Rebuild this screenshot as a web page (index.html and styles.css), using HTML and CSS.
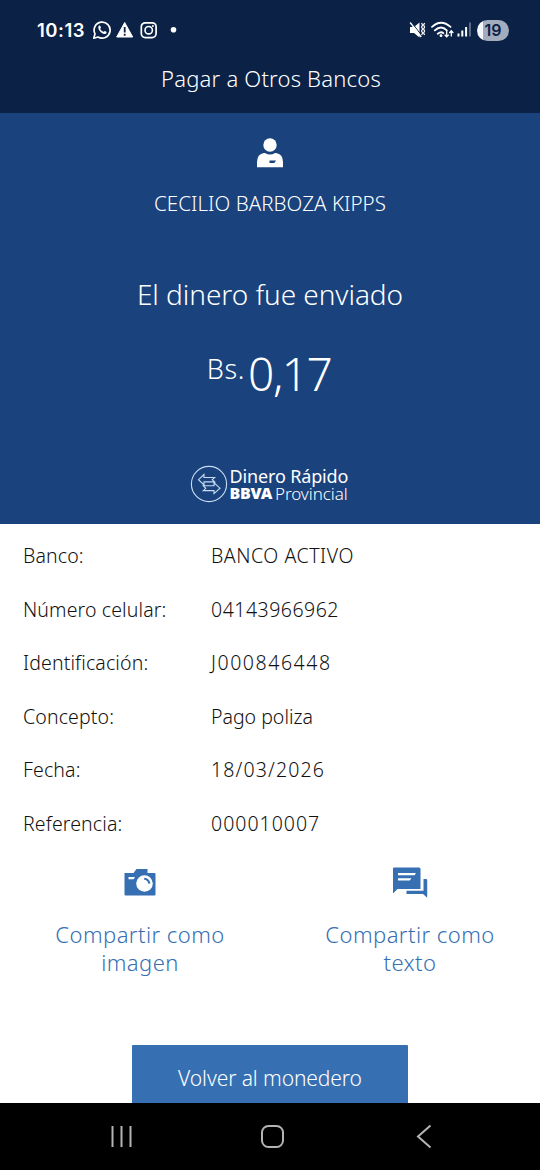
FILE: index.html
```html
<!DOCTYPE html>
<html lang="es">
<head>
<meta charset="utf-8">
<title>Pagar a Otros Bancos</title>
<link rel="stylesheet" href="styles.css">
</head>
<body>
<div class="screen">
  <header class="top">
    <div class="status">
      <span class="clock">10:13</span>
      <svg class="notif" width="90" height="20" viewBox="0 0 90 20" fill="none" stroke="#fff">
        <path d="M1.8 18.2l1.200-4.400A8 8 0 1 1 6 17z" stroke-width="1.700" stroke-linejoin="round"/>
        <path d="M6.600 6.100c.6-.8 1.500-.6 1.800.2l.5 1.200c.1.500-.7 1.100-.6 1.400.7 1.300 1.700 2.200 3.100 2.800.4.100.9-1 1.400-.8l1.600.8c.5.300.1 1.600-.6 2-2.900 1.600-8.800-3.600-7.200-7.600z" fill="#fff" stroke="none"/>
        <path d="M32.700 2.500l8 14.500h-16z" fill="#fff" stroke="#fff" stroke-width="1" stroke-linejoin="round"/>
        <path d="M32.700 7v5.500M32.700 13.800v2" stroke="#0b2146" stroke-width="1.800"/>
        <rect x="49.300" y="2.800" width="14.800" height="14.800" rx="4" stroke-width="1.700"/>
        <circle cx="56.700" cy="10.200" r="3.700" stroke-width="1.600"/>
        <circle cx="60.900" cy="6" r="1" fill="#fff" stroke="none"/>
        <circle cx="81.500" cy="9.700" r="2.800" fill="#fff" stroke="none"/>
      </svg>
      <svg class="signals" width="64" height="20" viewBox="0 0 64 20" fill="none" stroke="#fff">
        <path d="M1 7h4l5.500-4.500v15L5 13H1z" fill="#fff" stroke="none"/>
        <path d="M2.300 2l10 13" stroke="#0b2146" stroke-width="1"/>
        <path d="M1.200 2.500l11 14.500" stroke-width="1.400"/>
        <path d="M12.600 3l1 2-1 2 1 2-1 2 1 2-1 2M15.600 3l-1 2 1 2-1 2 1 2-1 2 1 2" stroke-width="1.200"/>
        <path d="M23 6.900q9-8.200 18.500 0M25.800 10.400q6.400-5.700 12 0M28.800 13.700q3.400-2.700 5.500-.5" stroke-width="1.800" stroke-linecap="round"/>
        <circle cx="32" cy="15.700" r="1.400" fill="#fff" stroke="none"/>
        <path d="M37.700 11v5.700m-2-2l2 2.200 2-2.200M42.300 16.500v-5.500m-2 2l2-2.200 2 2.200" stroke-width="1.300"/>
        <path d="M49.500 16.500v-3M53.300 16.500V10.500M57.100 16.500V7" stroke-width="2"/>
        <path d="M61 16.500V2.500" stroke="#64738d" stroke-width="1.800"/>
      </svg>
      <span class="battery">19</span>
    </div>
    <h1 class="title">Pagar a Otros Bancos</h1>
  </header>

  <section class="hero">
    <svg class="person" width="28" height="30" viewBox="0 0 28 30">
      <circle cx="14" cy="7" r="6.700" fill="#fff"/>
      <path d="M1 29.300V24q0-8 7-9h1q5 3 10 0h1q7 1 7 9v5.300z" fill="#fff"/>
      <path d="M13.500 22.500h6.500l-1.600 2.600h-4.900z" fill="#1a427c"/>
    </svg>
    <p class="name">CECILIO BARBOZA KIPPS</p>
    <p class="sent">El dinero fue enviado</p>
    <p class="amount"><span class="currency">Bs.</span><span class="value">0,17</span></p>
    <div class="brand">
      <svg class="brand-mark" width="38" height="38" viewBox="0 0 38 38" fill="none" stroke="#c9dcf4" stroke-width="1.100">
        <circle cx="19" cy="19" r="17.600"/>
        <path d="M14 9.500L8.500 14.700l5.500 5.200v-3h10.700l-2.500-2.200 2.500-2.200H14zM24 17.800v3H13.300l2.500 2.500-2.500 2.300H24v3l6-5.400z"/>
      </svg>
      <div class="brand-text">
        <span class="brand-top">Dinero Rápido</span>
        <span class="brand-bottom"><b>BBVA</b><span class="provincial">Provincial</span></span>
      </div>
    </div>
  </section>

  <main class="content">
    <dl class="details">
      <dt>Banco:</dt><dd class="bank">BANCO ACTIVO</dd>
      <dt>Número celular:</dt><dd class="phone">04143966962</dd>
      <dt>Identificación:</dt><dd class="ident">J000846448</dd>
      <dt>Concepto:</dt><dd>Pago poliza</dd>
      <dt>Fecha:</dt><dd class="date">18/03/2026</dd>
      <dt>Referencia:</dt><dd class="ref">000010007</dd>
    </dl>
    <div class="share">
      <div class="share-item">
        <svg width="36" height="34" viewBox="0 0 36 34">
          <path d="M2.500 7h9l3-4h11v4h7q1 0 1 1v20.500q0 1-1 1H3.500q-1 0-1-1z" fill="#3670b3"/>
          <path d="M6.500 11h6.500l-1.400 2.200H6.500z" fill="#fff"/>
          <circle cx="22.500" cy="17.500" r="8.300" fill="#fff"/>
          <path d="M22.200 12.700q4.500.3 5.200 5" fill="none" stroke="#3670b3" stroke-width="2"/>
        </svg>
        <span>Compartir como<br>imagen</span>
      </div>
      <div class="share-item">
        <svg width="36" height="34" viewBox="0 0 36 34" fill="#3670b3">
          <path d="M2 1.500h25q1.500 0 1.500 1.500v20H5.500L1 27.500V2.500q0-1 1-1z"/>
          <path d="M31.500 13h2.500q1.200 0 1.200 1.200v17.500L31 28H14.500v-3.200h17z"/>
          <path d="M6 7h18l-1.400 2.200H6zM6 12.200h13.500L17.700 14.400H6z" fill="#fff"/>
        </svg>
        <span>Compartir como<br>texto</span>
      </div>
    </div>
    <button class="back">Volver al monedero</button>
  </main>

  <nav class="nav">
    <svg width="540" height="67" viewBox="0 0 540 67" fill="none" stroke="#b4b4b4" stroke-width="2">
      <path d="M112.500 23v21M121.500 23v21M130.500 23v21"/>
      <rect x="262" y="23" width="21" height="21" rx="6.500"/>
      <path d="M430.500 22.500l-12.500 11L430.500 44.500"/>
    </svg>
  </nav>
</div>
</body>
</html>
```
FILE: styles.css
```css
* { box-sizing: border-box; }
body { margin: 0; font-family: "Noto Sans", sans-serif; font-weight: 300; }
h1, p, dl, dt, dd { margin: 0; font-weight: 300; }
.screen { width: 540px; height: 1170px; display: flex; flex-direction: column; background: #fff; overflow: hidden; }
.top { height: 113px; background: #0c2146; color: #fff; }
.status { height: 60px; display: flex; align-items: center; padding-left: 37px; }
.clock { width: 55px; font: 600 18.500px Inter, sans-serif; letter-spacing: 0.500px; white-space: nowrap; }
.notif { flex: none; }
.signals { flex: none; margin-left: 227px; }
.battery { width: 32px; height: 21px; margin-left: 4px; border-radius: 11px; background: linear-gradient(90deg, #f3f6fa 19%, #a2acbc 19%); color: #0c2146; font: 600 16px/21px Inter, sans-serif; text-align: center; }
.title { padding-left: 2px; font-size: 22px; line-height: 36px; letter-spacing: 0.200px; text-align: center; white-space: nowrap; }
.hero { height: 411px; background: #1a427c; color: #fff; display: flex; flex-direction: column; align-items: center; white-space: nowrap; }
.person { margin-top: 25px; flex: none; }
.name { margin-top: 19px; font-size: 20.500px; line-height: 32px; letter-spacing: 0.050px; }
.sent { margin-top: 55px; font-size: 28px; line-height: 40px; letter-spacing: -0.050px; }
.amount { margin-top: 29px; height: 64px; display: flex; gap: 3px; padding-right: 2px; }
.currency { font-size: 27px; line-height: 52px; letter-spacing: 0.700px; }
.value { font-size: 46px; line-height: 60px; letter-spacing: -1.500px; }
.brand { margin-top: 58px; display: flex; gap: 2px; height: 38px; }
.brand-mark { flex: none; }
.brand-text { width: 121px; display: flex; flex-direction: column; padding-top: 2px; }
.brand-top { font-size: 18px; line-height: 18px; font-weight: 400; letter-spacing: -0.150px; }
.brand-bottom { display: flex; gap: 3px; font-size: 17px; line-height: 17px; }
.brand-bottom b { font-size: 16px; font-weight: 900; letter-spacing: -0.300px; }
.provincial { letter-spacing: -0.050px; }
.content { height: 579px; display: flex; flex-direction: column; align-items: center; color: #111; }
.details { width: 540px; padding: 5px 23px 0; display: grid; grid-template-columns: 188px 1fr; grid-auto-rows: 53.5px; font-size: 19.500px; line-height: 53px; white-space: nowrap; }
.details dt { letter-spacing: 0.130px; }
.bank { letter-spacing: 0.550px; }
.phone { letter-spacing: 0.500px; }
.ident { letter-spacing: 1.550px; }
.date { letter-spacing: 1.150px; }
.ref { letter-spacing: 1px; }
.share { width: 540px; padding-left: 5px; display: grid; grid-template-columns: 270px 270px; margin-top: 16px; }
.share-item { display: flex; flex-direction: column; align-items: center; gap: 20px; color: #3670b3; font-size: 22px; line-height: 28px; letter-spacing: 0.450px; text-align: center; }
.share-item { padding-right: 0; }
.share { padding-left: 0; padding-right: 0; transform: none; grid-template-columns: 280px 260px; }
.share-item:last-child { padding-right: 0; }
.back { width: 276px; height: 58px; flex: none; margin-top: auto; padding: 8px 0 0; border: 0; border-radius: 1px 1px 0 0; background: #3670b3; color: #fff; font: 300 21px "Noto Sans", sans-serif; letter-spacing: -0.100px; }
.nav { height: 67px; background: #000; }
.nav svg { display: block; }
```
